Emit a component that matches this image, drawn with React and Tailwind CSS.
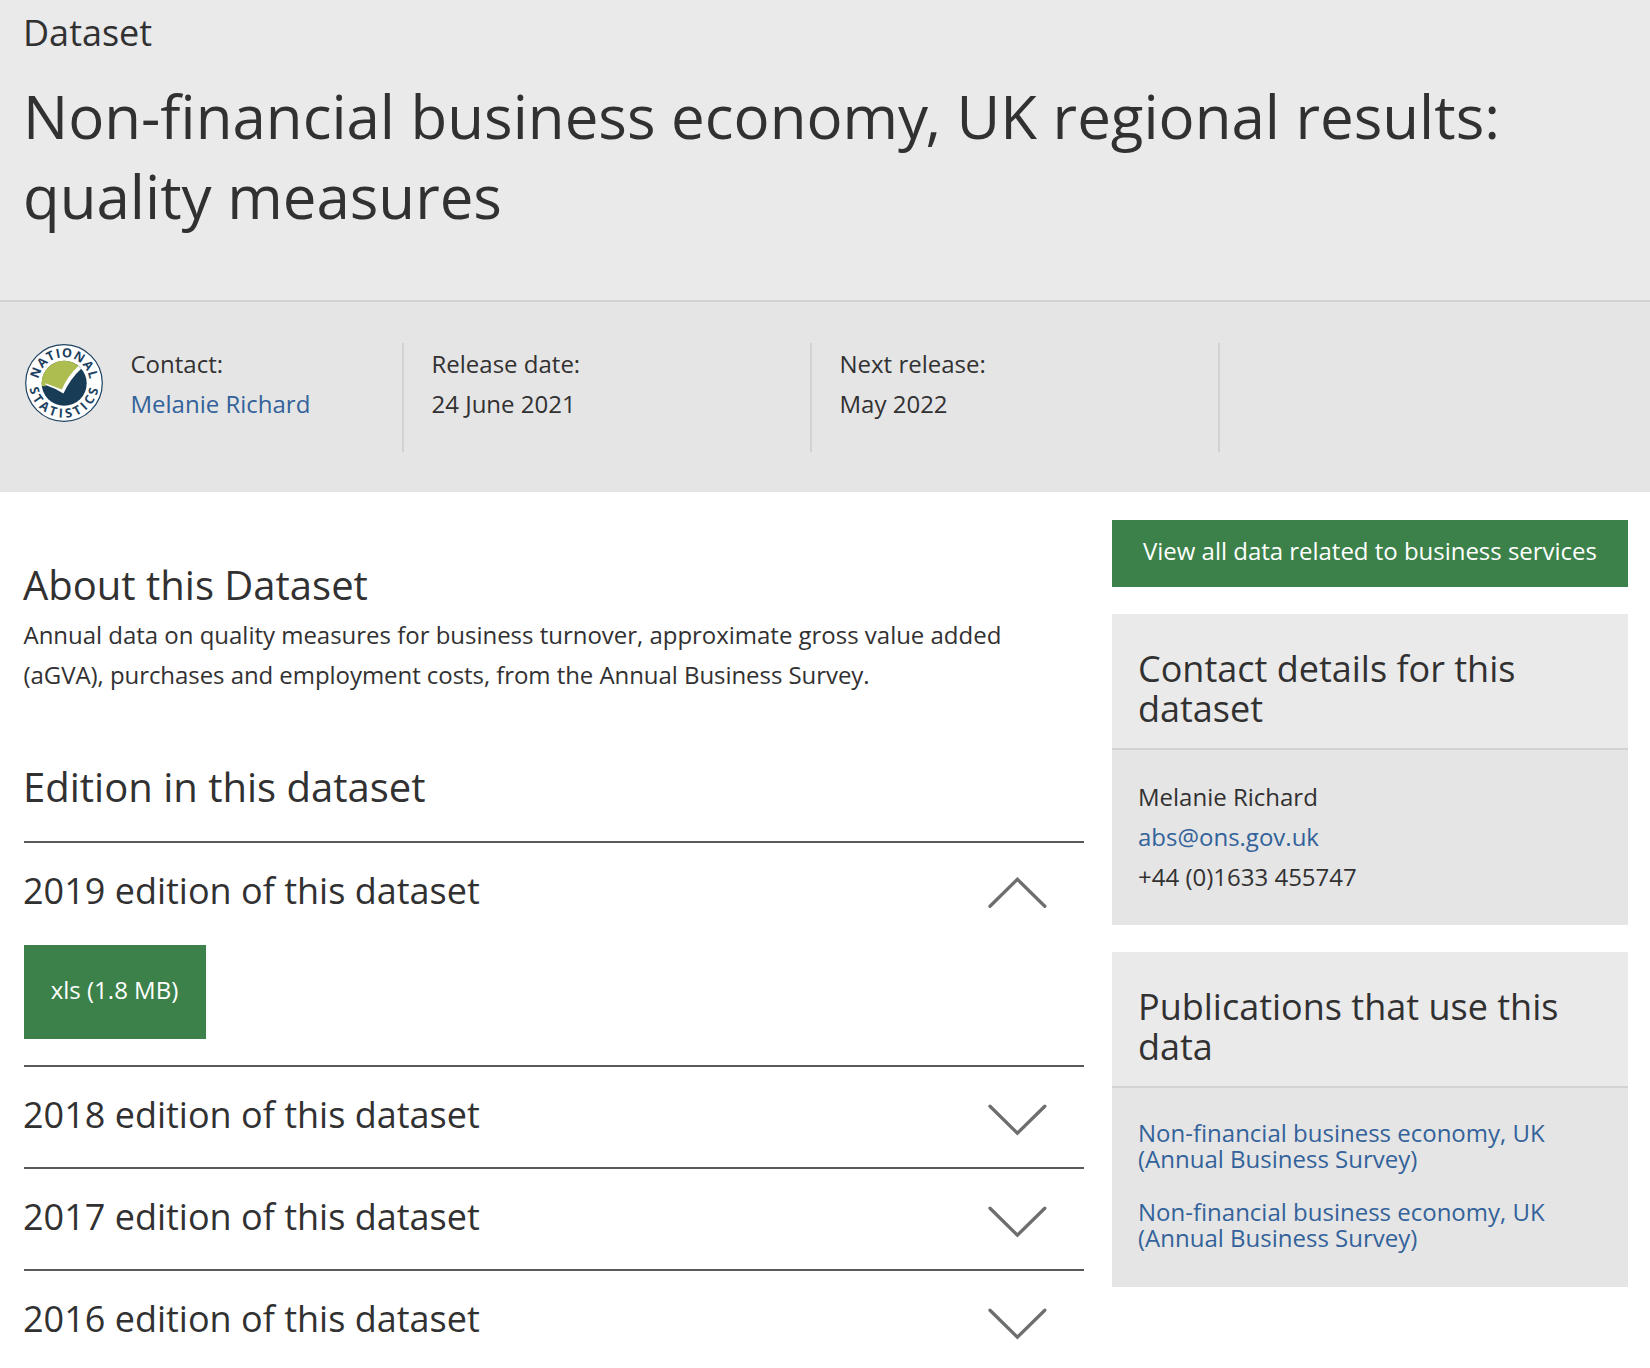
import React from "react";

function NationalStatisticsLogo() {
  return (
    <svg viewBox="0 0 78 78" className="mt-px size-[78px] shrink-0" role="img" aria-label="National Statistics">
      <defs>
        <path id="ring-top" d="M13.2 39 A25.8 25.8 0 0 1 64.8 39" />
        <path id="ring-bottom" d="M4.1 36 A35 35 0 1 0 73.9 36" />
      </defs>
      <circle cx="39" cy="39" r="38.3" fill="#fff" stroke="#1d4261" strokeWidth="1.2" />
      <circle cx="39.2" cy="39.3" r="22.5" fill="#193c56" />
      <path
        d="M16.8 42 A22.5 22.5 0 0 1 54.5 22.8 Q44.5 31.5 37.5 46.5 L21 40.8 L20.5 42.3 Z"
        fill="#adbd50"
      />
      <path d="M20.4 39.3 L36.8 45.4 Q43 31.5 53.4 22 L56.2 24.8 Q46 34 38.4 49.4 Q29.5 44 20.6 41 Z" fill="#fff" />
      <g fill="#1d4261" fontFamily="Open Sans, sans-serif" fontSize="12.6" fontWeight="700" textAnchor="middle">
        <text letterSpacing="0.9">
          <textPath href="#ring-top" startOffset="50.5%">NATIONAL</textPath>
        </text>
        <text letterSpacing="3.3">
          <textPath href="#ring-bottom" startOffset="51.2%">STATISTICS</textPath>
        </text>
      </g>
    </svg>
  );
}

function Chevron({ open }) {
  return (
    <svg
      viewBox="0 0 60 32"
      fill="none"
      stroke="#6d6e70"
      strokeWidth="3.3"
      strokeLinecap="round"
      className={open ? "mr-[37px] mt-[34px] h-8 w-[60px]" : "mr-[37px] mt-[37px] h-8 w-[60px]"}
    >
      <path d={open ? "M3 29.3 L30.4 2.4 L57.8 29.3" : "M3 2.2 L30.4 29.1 L57.8 2.2"} />
    </svg>
  );
}

function Edition({ year, open, children }) {
  return (
    <section className="border-t-2 border-[#58595b]">
      <div className="flex h-[100px] items-start justify-between">
        <h3 className="-ml-px mt-[28px] text-4xl leading-10">{year} edition of this dataset</h3>
        <Chevron open={open} />
      </div>
      {children}
    </section>
  );
}

function MetaItem({ label, children }) {
  return (
    <div className="w-[408px] border-r-2 border-[#d0d2d3] pl-[27.5px] pt-px">
      <p>{label}</p>
      <p>{children}</p>
    </div>
  );
}

function Card({ title, children }) {
  return (
    <section className="bg-[#e5e5e5]">
      <h2 className="border-b-2 border-[#d0d2d3] bg-[#eaeaea] pb-[19px] pl-[26px] pr-[26px] pt-[35px] text-4xl leading-10">
        {title}
      </h2>
      {children}
    </section>
  );
}

const link = "text-[#33629a]";

export default function App() {
  return (
    <div className="h-[1368px] w-[1650px] overflow-hidden bg-white font-['Open_Sans',sans-serif] text-2xl leading-10 text-[#323132]">
      <header>
        <div className="border-b-2 border-[#d0d2d3] bg-[#eaeaea] pb-16 pl-[23px] pr-6 pt-[13px]">
          <p className="text-4xl leading-10">Dataset</p>
          <h1 className="mt-[23px] text-[60px] leading-[80px]">
            Non-financial business econom<span className="tracking-[-2.7px]">y</span>, UK regional results:
            <br />
            quality measures
          </h1>
        </div>
        <div className="flex h-[190px] bg-[#e5e5e5] pb-10 pl-[25px] pt-[41px]">
          <div className="flex w-[379px] border-r-2 border-[#d0d2d3]">
            <NationalStatisticsLogo />
            <div className="pl-[27.5px] pt-px">
              <p>Contact:</p>
              <a className={link}>Melanie Richard</a>
            </div>
          </div>
          <MetaItem label="Release date:">24 June 2021</MetaItem>
          <MetaItem label="Next release:">May 2022</MetaItem>
        </div>
      </header>

      <div className="flex gap-7 pl-6">
        <main className="w-[1060px] pt-[69px]">
          <h2 className="-ml-px text-[40px] leading-[48px]">About this Dataset</h2>
          <p className="-ml-[0.5px] mt-[6px]">
            <span className="tracking-[-0.02px]">
              Annual data on quality measures for business turnover, approximate gross value added
            </span>
            <br />
            <span className="tracking-[-0.06px]">
              (aGVA), purchases and employment costs, from the Annual Business Survey.
            </span>
          </p>
          <h2 className="-ml-px mb-[30px] mt-[68px] text-[40px] leading-[48px]">Edition in this dataset</h2>
          <Edition year="2019" open>
            <div className="pb-[26px] pt-[2px]">
              <button className="block h-[94px] w-[182px] bg-[#3b8149] pb-[4px] pr-px text-white">xls (1.8 MB)</button>
            </div>
          </Edition>
          <Edition year="2018" />
          <Edition year="2017" />
          <Edition year="2016" />
        </main>

        <aside className="flex w-[516px] flex-col pt-7">
          <button className="mb-[27px] h-[67px] bg-[#3b8149] pb-[5px] tracking-[-0.02px] text-white">
            View all data related to business services
          </button>
          <Card title="Contact details for this dataset">
            <div className="h-[175px] pl-[26px] pt-[27px]">
              <p>Melanie Richard</p>
              <p className={link}>abs@ons.gov.uk</p>
              <p>+44 (0)1633 455747</p>
            </div>
          </Card>
          <div className="h-[27px]" />
          <Card title="Publications that use this data">
            <div className="flex h-[199px] flex-col gap-[27px] pl-[26px] pt-8 leading-[26px] text-[#33629a]">
              <a>
                Non-financial business economy, UK
                <br />
                (Annual Business Survey)
              </a>
              <a>
                Non-financial business economy, UK
                <br />
                (Annual Business Survey)
              </a>
            </div>
          </Card>
        </aside>
      </div>
    </div>
  );
}
